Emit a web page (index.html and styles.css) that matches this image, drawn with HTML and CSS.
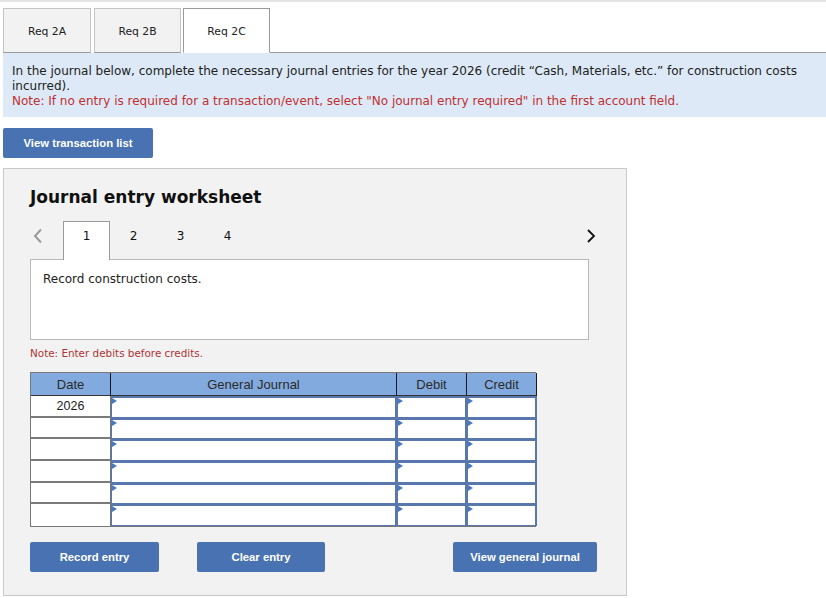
FILE: index.html
```html
<!DOCTYPE html>
<html>
<head>
<meta charset="utf-8">
<link rel="stylesheet" href="styles.css">
</head>
<body>
<div class="topline"></div>
<div class="tabs">
  <div class="tab">Req 2A</div>
  <div class="tab">Req 2B</div>
  <div class="tab active">Req 2C</div>
  <div class="tabfill"></div>
</div>
<div class="instructions">
  <p>In the journal below, complete the necessary journal entries for the year 2026 (credit “Cash, Materials, etc.” for construction costs incurred).</p>
  <p class="red">Note: If no entry is required for a transaction/event, select "No journal entry required" in the first account field.</p>
</div>
<button class="btn btn-list">View transaction list</button>
<div class="panel">
  <h1 class="title">Journal entry worksheet</h1>
  <div class="nav">
    <span class="arrow prev">
      <svg width="10" height="16" viewBox="0 0 10 16"><path d="M8 1.5 L2 8 L8 14.5" fill="none" stroke="#9a9a9a" stroke-width="2"/></svg>
    </span>
    <div class="steps">
      <div class="step active">1</div>
      <div class="step">2</div>
      <div class="step">3</div>
      <div class="step">4</div>
    </div>
    <span class="arrow next">
      <svg width="10" height="16" viewBox="0 0 10 16"><path d="M2 2 L8 8 L2 14" fill="none" stroke="#111" stroke-width="1.8"/></svg>
    </span>
  </div>
  <div class="record">Record construction costs.</div>
  <p class="note">Note: Enter debits before credits.</p>
  <div class="journal">
    <div class="head">Date</div>
    <div class="head">General Journal</div>
    <div class="head">Debit</div>
    <div class="head last">Credit</div>

    <div class="date">2026</div><div class="field"></div><div class="field"></div><div class="field"></div>
    <div class="date"></div><div class="field"></div><div class="field"></div><div class="field"></div>
    <div class="date"></div><div class="field"></div><div class="field"></div><div class="field"></div>
    <div class="date"></div><div class="field"></div><div class="field"></div><div class="field"></div>
    <div class="date"></div><div class="field"></div><div class="field"></div><div class="field"></div>
    <div class="date"></div><div class="field"></div><div class="field"></div><div class="field"></div>
  </div>
  <div class="actions">
    <button class="btn btn-record">Record entry</button>
    <button class="btn btn-clear">Clear entry</button>
    <button class="btn btn-view">View general journal</button>
  </div>
</div>
</body>
</html>
```
FILE: styles.css
```css
* { box-sizing: border-box; }
body {
  margin: 0;
  width: 826px;
  height: 598px;
  overflow: hidden;
  background: #fff;
  font-family: "DejaVu Sans", Verdana, sans-serif;
  color: #222;
}
.topline { height: 2px; background: #e4e4e4; }
.tabs {
  display: flex;
  margin-top: 6px;
  padding-left: 3px;
  height: 45px;
}
.tab {
  width: 88px;
  height: 45px;
  margin-right: 3px;
  background: #f2f2f2;
  border: 1px solid #c4c4c4;
  border-bottom: 1px solid #9a9a9a;
  display: flex;
  align-items: center;
  justify-content: center;
  font-size: 10.8px;
  color: #222;
  padding-top: 1px;
}
.tab:nth-child(2) { width: 87px; margin-right: 2px; }
.tab.active {
  width: 87px;
  margin-right: 0;
  background: #fff;
  border-color: #9a9a9a;
  border-bottom: 1px solid #fff;
}
.tabfill { flex: 1; border-bottom: 1px solid #9a9a9a; }
.instructions {
  margin-left: 3px;
  background: #dde9f7;
  padding: 11px 9px 8px 9px;
  height: 64px;
  font-size: 12px;
  line-height: 15px;
  color: #222;
}
.instructions p { margin: 0; }
.instructions .red { color: #c0302f; }
.btn {
  display: block;
  border: none;
  border-radius: 2px;
  background: #4872b2;
  color: #fff;
  font-family: "Liberation Sans", Arial, sans-serif;
  font-weight: bold;
  font-size: 11.3px;
  cursor: pointer;
  padding: 0;
}
.btn-list {
  margin: 11px 0 0 3px;
  width: 150px;
  height: 30px;
}
.panel {
  margin: 10px 0 0 3px;
  width: 624px;
  height: 428px;
  background: #f2f2f2;
  border: 1px solid #c8c8c8;
  padding: 0 0 0 26px;
}
.title {
  margin: 17px 0 0 0;
  font-size: 17px;
  line-height: 22px;
  font-weight: bold;
  color: #111;
}
.nav {
  margin-top: 13px;
  display: flex;
  align-items: flex-end;
  width: 559px;
  height: 38px;
}
.arrow { display: flex; align-items: flex-start; height: 38px; padding-top: 7px; }
.arrow.prev { width: 33px; padding-left: 3px; }
.arrow.next { margin-left: auto; margin-right: -7px; }
.steps { display: flex; }
.step {
  width: 47px;
  height: 38px;
  display: flex;
  align-items: flex-start;
  justify-content: center;
  font-size: 12px;
  line-height: 14px;
  color: #111;
  padding-top: 8px;
}
.step.active {
  background: #fff;
  border: 1px solid #9a9a9a;
  border-bottom: none;
  height: 39px;
  margin-bottom: -1px;
  position: relative;
  z-index: 1;
  padding-top: 7px;
}
.record {
  width: 559px;
  height: 81px;
  background: #fff;
  border: 1px solid #b8b8b8;
  padding: 11px 12px;
  font-size: 12px;
  line-height: 16px;
  color: #222;
}
.note {
  margin: 7px 0 0 0;
  font-size: 10.4px;
  line-height: 12px;
  color: #b03535;
}
.journal {
  margin-top: 13px;
  display: grid;
  grid-template-columns: 80px 286px 70px 70px;
  grid-auto-rows: 21.7px;
  grid-template-rows: 23px;
  width: 506px;
  border: 1px solid #777;
}
.head {
  background: #82aade;
  border-right: 1px solid #1a1a1a;
  border-bottom: 1px solid #333;
  font-family: "Liberation Sans", Arial, sans-serif;
  font-size: 13px;
  color: #2a2a2a;
  display: flex;
  align-items: center;
  justify-content: center;
}
.date {
  background: #fff;
  border-bottom: 2px solid #7a7a7a;
  border-right: 1px solid #777;
  font-family: "Liberation Sans", Arial, sans-serif;
  font-size: 12.5px;
  color: #222;
  display: flex;
  align-items: center;
  justify-content: center;
}
.date:nth-last-child(4) { border-bottom: none; }
.field {
  position: relative;
  background: #fff;
  border: 2px solid #5878ad;
  border-bottom-width: 1.5px;
  border-left-width: 1.5px;
}
.field::before {
  content: "";
  position: absolute;
  left: 0;
  top: 0;
  width: 0;
  height: 0;
  border-top: 3px solid transparent;
  border-bottom: 3px solid transparent;
  border-left: 5px solid #4a78c0;
}
.actions {
  display: flex;
  margin-top: 15px;
}
.btn-record { width: 129px; height: 30px; }
.btn-clear { width: 128px; height: 30px; margin-left: 38px; }
.btn-view { width: 144px; height: 30px; margin-left: 128px; }
```
